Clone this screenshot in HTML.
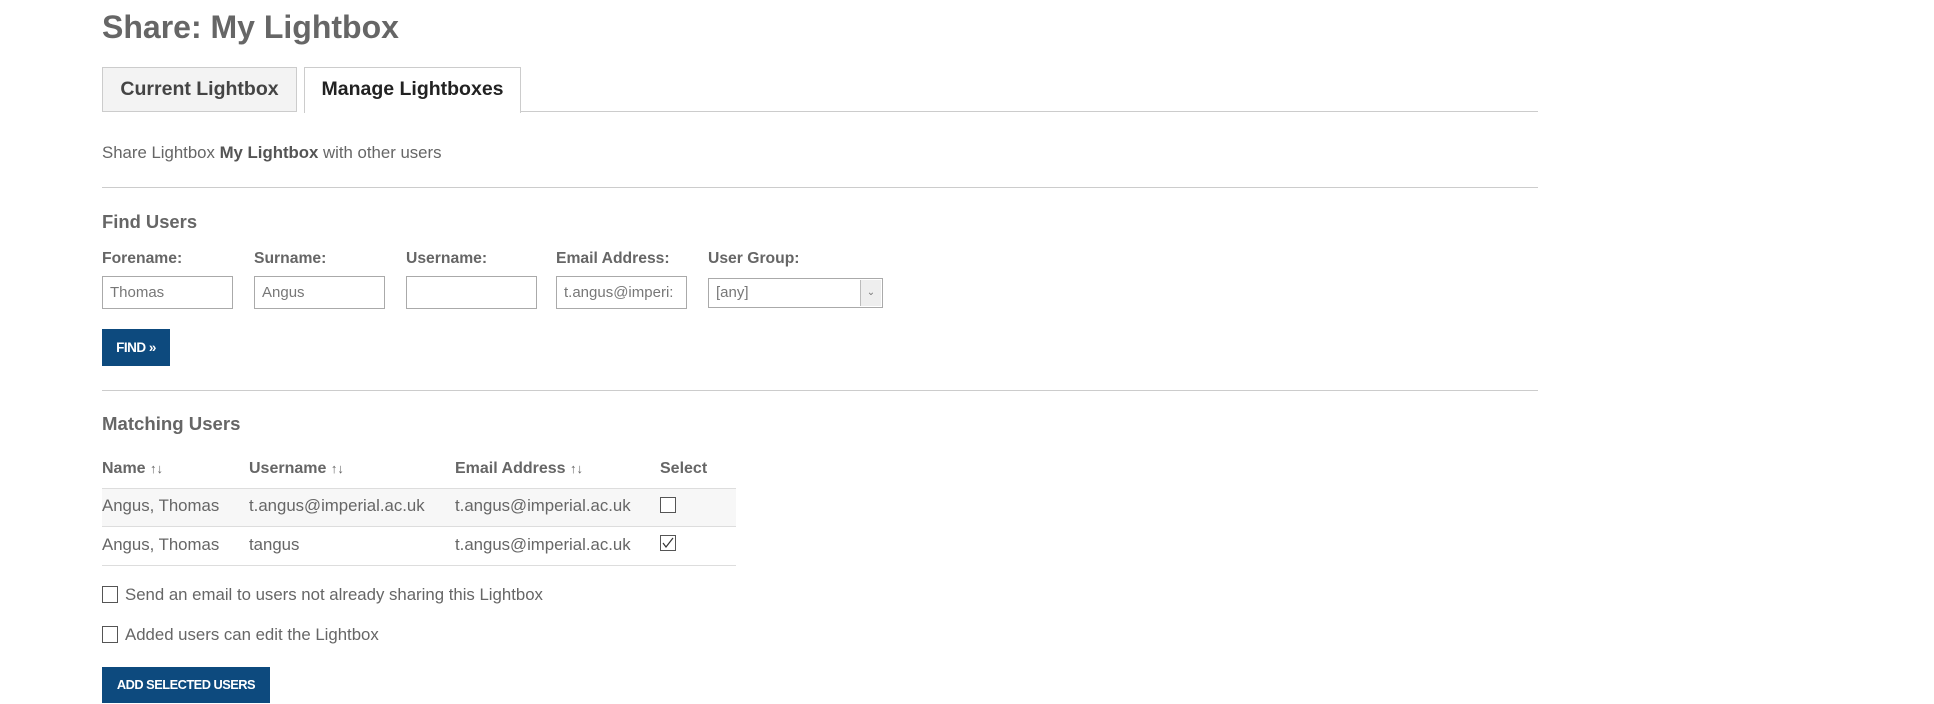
<!DOCTYPE html>
<html><head><style>
body{margin:0;width:1934px;height:704px;background:#fff;font-family:"Liberation Sans",sans-serif;color:#666;position:relative;overflow:hidden}
.a{position:absolute;white-space:nowrap}
.inp{position:absolute;top:276px;height:33px;border:1px solid #aaa;box-sizing:border-box;font-size:15px;color:#777;padding:7px 0 0 7px;white-space:nowrap}
.lab{position:absolute;top:250px;font-size:15.7px;font-weight:bold;color:#666}
.hr{position:absolute;left:102px;width:1436px;height:1px;background:#ccc}
.btn{position:absolute;background:#0d4a7e;color:#fff;font-weight:bold;box-sizing:border-box;text-align:center;letter-spacing:-0.5px}
.cb{position:absolute;width:15px;height:15px;border:1px solid #555;box-sizing:border-box;background:#fff}
.th{position:absolute;top:460px;font-size:16px;font-weight:bold;color:#666}
.td{position:absolute;font-size:16.8px;color:#666}
</style></head><body>
<div class="a" style="left:102px;top:9px;font-size:32px;font-weight:bold;color:#666">Share: My Lightbox</div>
<div class="a" style="left:102px;top:67px;width:195px;height:45px;background:#f3f3f3;border:1px solid #ccc;box-sizing:border-box;font-size:19.5px;font-weight:bold;color:#444;text-align:center;line-height:43px">Current Lightbox</div>
<div class="hr" style="top:111px;left:520px;width:1018px"></div>
<div class="a" style="left:304px;top:67px;width:217px;height:46px;background:#fff;border:1px solid #ccc;border-bottom:none;box-sizing:border-box;font-size:19.5px;font-weight:bold;color:#222;text-align:center;line-height:43px">Manage Lightboxes</div>
<div class="a" style="left:102px;top:143px;font-size:16.8px;color:#666">Share Lightbox <b style="color:#555">My Lightbox</b> with other users</div>
<div class="hr" style="top:187px"></div>
<div class="a" style="left:102px;top:211px;font-size:18.4px;font-weight:bold">Find Users</div>
<div class="lab" style="left:102px">Forename:</div>
<div class="lab" style="left:254px">Surname:</div>
<div class="lab" style="left:406px">Username:</div>
<div class="lab" style="left:556px">Email Address:</div>
<div class="lab" style="left:708px">User Group:</div>
<div class="inp" style="left:102px;width:131px">Thomas</div>
<div class="inp" style="left:254px;width:131px">Angus</div>
<div class="inp" style="left:406px;width:131px"></div>
<div class="inp" style="left:556px;width:131px;overflow:hidden">t.angus@imperi:</div>
<div class="inp" style="left:708px;width:175px;height:30px;top:278px;padding-top:5px">[any]<div style="position:absolute;right:1px;top:1px;width:20px;height:26px;border-left:1px solid #bbb;background:#eee;font-size:10px;text-align:center;line-height:26px;padding:0">&#8964;</div></div>
<div class="btn" style="left:102px;top:329px;width:68px;height:37px;line-height:37px;font-size:13.5px">FIND &raquo;</div>
<div class="hr" style="top:390px"></div>
<div class="a" style="left:102px;top:413px;font-size:18.6px;font-weight:bold">Matching Users</div>
<div class="th" style="left:102px">Name <span style="font-weight:normal;font-size:13px">&#8593;&#8595;</span></div>
<div class="th" style="left:249px">Username <span style="font-weight:normal;font-size:13px">&#8593;&#8595;</span></div>
<div class="th" style="left:455px">Email Address <span style="font-weight:normal;font-size:13px">&#8593;&#8595;</span></div>
<div class="th" style="left:660px">Select</div>
<div class="a" style="left:102px;top:488px;width:634px;height:39px;background:#f7f7f7;border-top:1px solid #ddd;border-bottom:1px solid #ddd;box-sizing:border-box"></div>
<div class="a" style="left:102px;top:565px;width:634px;height:1px;background:#ddd"></div>
<div class="td" style="left:102px;top:496px">Angus, Thomas</div>
<div class="td" style="left:249px;top:496px">t.angus@imperial.ac.uk</div>
<div class="td" style="left:455px;top:496px">t.angus@imperial.ac.uk</div>
<div class="cb" style="left:660px;top:497px;width:16px;height:16px"></div>
<div class="td" style="left:102px;top:535px">Angus, Thomas</div>
<div class="td" style="left:249px;top:535px">tangus</div>
<div class="td" style="left:455px;top:535px">t.angus@imperial.ac.uk</div>
<div class="cb" style="left:660px;top:535px;width:16px;height:16px"><svg width="14" height="14" style="position:absolute;left:0;top:0"><path d="M2 7 L5 11 L12 2" stroke="#333" stroke-width="1.2" fill="none"/></svg></div>
<div class="cb" style="left:102px;top:586px;width:16px;height:17px"></div>
<div class="td" style="left:125px;top:585px">Send an email to users not already sharing this Lightbox</div>
<div class="cb" style="left:102px;top:626px;width:16px;height:17px"></div>
<div class="td" style="left:125px;top:625px">Added users can edit the Lightbox</div>
<div class="btn" style="left:102px;top:667px;width:168px;height:36px;line-height:36px;font-size:12.8px">ADD SELECTED USERS</div>
</body></html>
